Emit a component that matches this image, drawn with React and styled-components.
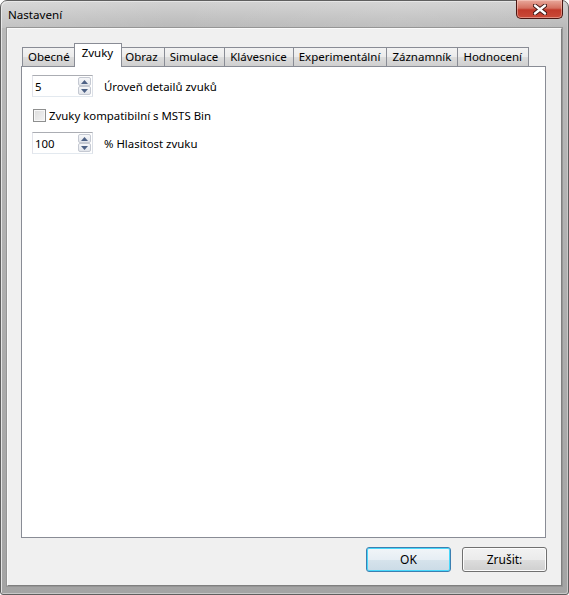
import React from 'react';
import styled, { createGlobalStyle, css } from 'styled-components';

const GlobalStyle = createGlobalStyle`
  html, body {
    margin: 0;
    padding: 0;
    background: #ffffff;
  }
  body {
    font-family: "Noto Sans", "Liberation Sans", sans-serif;
    font-size: 11.4px;
    color: #000;
  }
`;

const Window = styled.div`
  width: 569px;
  height: 595px;
  box-sizing: border-box;
  display: flex;
  flex-direction: column;
  border: 1px solid #5f5f5f;
  border-radius: 7px 7px 3px 3px;
  padding: 0 6px 8px 6px;
  background: linear-gradient(to bottom, #d2d2d2 0px, #b9b9b9 27px, #acacac 60%, #a4a4a4 100%);
  box-shadow: inset 1px 1px 0 #e4e4e4, inset -1px -1px 0 #c8c8c8;
`;

const TitleBar = styled.div`
  height: 27px;
  display: flex;
  align-items: flex-start;
  justify-content: space-between;
  background: linear-gradient(to right, rgba(255,255,255,0.15), rgba(0,0,0,0) 30%, rgba(255,255,255,0.08) 70%, rgba(0,0,0,0));
  margin: 0 -6px;
  padding: 0 5px 0 7px;
`;

const Title = styled.div`
  padding-top: 6px;
  font-size: 11.6px;
  color: #000;
`;

const CloseButton = styled.div`
  width: 47px;
  height: 19px;
  box-sizing: border-box;
  margin-top: -1px;
  border: 1px solid #4a1612;
  border-top: none;
  border-radius: 0 0 5px 5px;
  display: flex;
  align-items: center;
  justify-content: center;
  background: linear-gradient(to bottom, #e9a99c 0%, #d47060 45%, #c1392a 55%, #c94a38 100%);
  box-shadow: inset 0 0 0 1px rgba(255, 220, 210, 0.45);
`;

const Client = styled.div`
  flex: 1;
  display: flex;
  flex-direction: column;
  background: #f0f0f0;
  border: 1px solid;
  border-color: #fafafa #7f7f7f #7f7f7f #fafafa;
  box-shadow: 0 0 0 1px #959595;
  padding: 14px 15px 13px 13px;
`;

const TabStrip = styled.div`
  height: 23px;
  display: flex;
  align-items: flex-end;
  padding-left: 1px;
`;

const Tab = styled.div`
  height: 19px;
  box-sizing: border-box;
  border: 1px solid #898c95;
  border-bottom: none;
  margin-left: -1px;
  padding: 1px 6px 0 5px;
  font-size: 11.5px;
  background: linear-gradient(to bottom, #f3f3f3 0%, #ebebeb 50%, #dddddd 51%, #cfcfcf 100%);
  white-space: nowrap;
  line-height: 16px;
  &:first-child {
    margin-left: 0;
  }
  ${p => p.$active && css`
    position: relative;
    z-index: 1;
    height: 24px;
    margin: 0 -2px -1px -3px;
    padding: 0 8px 0 7px;
    background: #ffffff;
    line-height: 17px;
  `}
`;

const Panel = styled.div`
  flex: 1;
  background: #ffffff;
  border: 1px solid #898c95;
  padding: 8px 10px;
  display: flex;
  flex-direction: column;
`;

const Row = styled.div`
  display: flex;
  align-items: center;
  gap: 11px;
`;

const CheckRow = styled.label`
  display: flex;
  align-items: center;
  gap: 3px;
  margin: 12px 0 10px 1px;
  height: 13px;
`;

const SpinBox = styled.div`
  width: 61px;
  height: 22px;
  box-sizing: border-box;
  display: flex;
  align-items: center;
  border: 1px solid #abadb3;
  border-color: #abadb3 #dbdfe6 #e3e9ef #e2e3ea;
  background: #ffffff;
  padding: 1px 1px 1px 2px;
`;

const SpinValue = styled.span`
  flex: 1;
  padding-top: 1px;
`;

const SpinButtons = styled.div`
  display: flex;
  flex-direction: column;
  height: 100%;
  width: 13px;
`;

const SpinArrow = styled.div`
  flex: 1;
  box-sizing: border-box;
  border: 1px solid #c5c9d2;
  border-radius: 2px;
  background: linear-gradient(to bottom, #f6f7f9, #e2e5eb);
  display: flex;
  align-items: center;
  justify-content: center;
`;

const Label = styled.span`
  white-space: nowrap;
`;

const CheckBox = styled.span`
  width: 13px;
  height: 13px;
  box-sizing: border-box;
  border: 1px solid #8e8f8f;
  background: linear-gradient(135deg, #dcdcdc, #f4f4f4);
  box-shadow: inset 0 0 0 1px #f8f8f8;
`;

const Footer = styled.div`
  display: flex;
  justify-content: flex-end;
  gap: 11px;
  margin-top: 9px;
  margin-right: -1px;
`;

const Button = styled.button`
  width: 85px;
  height: 25px;
  box-sizing: border-box;
  font: inherit;
  font-size: 12px;
  color: #000;
  border: 1px solid #707070;
  border-radius: 3px;
  background: linear-gradient(to bottom, #f2f2f2 0%, #ebebeb 50%, #dddddd 51%, #cfcfcf 100%);
  box-shadow: inset 0 0 0 1px #fcfcfc;
  padding: 0;
  ${p => p.$default && css`
    border-color: #3c7fb1;
    background: linear-gradient(to bottom, #f1f5f8 0%, #e6eef4 50%, #d6e3ec 51%, #cbdbe6 100%);
    box-shadow: inset 0 0 0 1px #48d8fb;
  `}
`;

const ArrowIcon = ({ up }) => (
  <svg width="7" height="4" viewBox="0 0 7 4">
    <path d={up ? 'M0 4 L3.5 0 L7 4 Z' : 'M0 0 L3.5 4 L7 0 Z'} fill="#4d6185" />
  </svg>
);

const Spinner = ({ value }) => (
  <SpinBox>
    <SpinValue>{value}</SpinValue>
    <SpinButtons>
      <SpinArrow><ArrowIcon up /></SpinArrow>
      <SpinArrow><ArrowIcon /></SpinArrow>
    </SpinButtons>
  </SpinBox>
);

const tabs = ['Obecné', 'Zvuky', 'Obraz', 'Simulace', 'Klávesnice', 'Experimentální', 'Záznamník', 'Hodnocení'];

export default function App() {
  return (
    <>
      <GlobalStyle />
      <Window>
        <TitleBar>
          <Title>Nastavení</Title>
          <CloseButton>
            <svg width="14" height="11" viewBox="0 0 14 11">
              <path d="M2 1.5 L12 9.5 M12 1.5 L2 9.5" stroke="#3a1210" strokeWidth="4.2" strokeLinecap="round" />
              <path d="M2 1.5 L12 9.5 M12 1.5 L2 9.5" stroke="#ffffff" strokeWidth="2.4" strokeLinecap="round" />
            </svg>
          </CloseButton>
        </TitleBar>
        <Client>
          <TabStrip>
            {tabs.map(t => (
              <Tab key={t} $active={t === 'Zvuky'}>{t}</Tab>
            ))}
          </TabStrip>
          <Panel>
            <Row>
              <Spinner value="5" />
              <Label>Úroveň detailů zvuků</Label>
            </Row>
            <CheckRow>
              <CheckBox />
              <Label>Zvuky kompatibilní s MSTS Bin</Label>
            </CheckRow>
            <Row>
              <Spinner value="100" />
              <Label>% Hlasitost zvuku</Label>
            </Row>
          </Panel>
          <Footer>
            <Button $default>OK</Button>
            <Button>Zrušit:</Button>
          </Footer>
        </Client>
      </Window>
    </>
  );
}
